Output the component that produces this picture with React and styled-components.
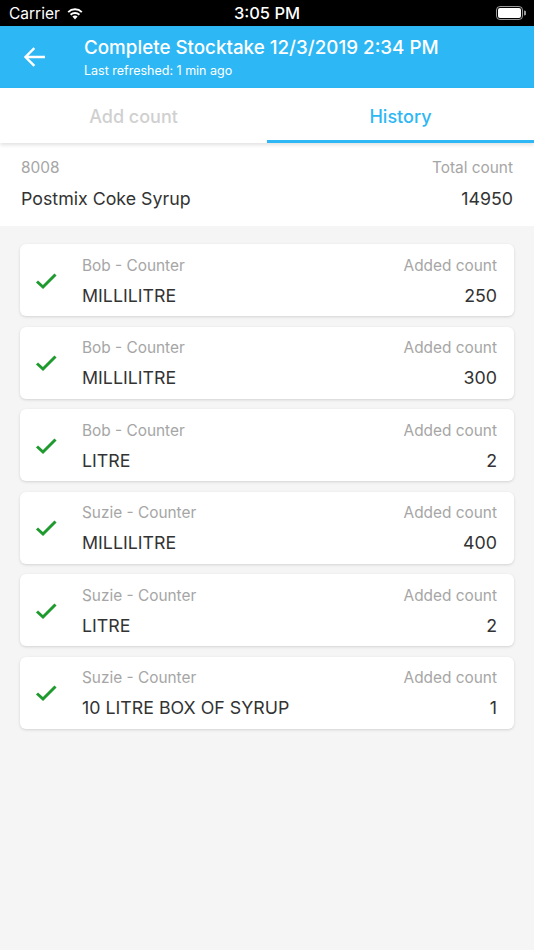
import React, { useState } from "react";
import styled, { createGlobalStyle } from "styled-components";

const GlobalStyle = createGlobalStyle`
  html, body {
    margin: 0;
    padding: 0;
    background: #f5f5f5;
    font-family: Inter, "Liberation Sans", sans-serif;
  }
`;

const Screen = styled.div`
  width: 534px;
  min-height: 950px;
  background: #f5f5f5;
  display: flex;
  flex-direction: column;
`;

const StatusBar = styled.div`
  height: 26px;
  background: #000;
  color: #fff;
  display: flex;
  align-items: center;
  justify-content: space-between;
  padding: 0 8px 0 9px;
  font-size: 15.5px;
  position: relative;
`;

const Carrier = styled.div`
  display: flex;
  align-items: center;
  gap: 6px;
`;

const Time = styled.div`
  position: absolute;
  left: 0;
  right: 0;
  text-align: center;
  font-size: 16.5px;
  font-weight: 500;
  pointer-events: none;
`;

const Header = styled.div`
  height: 62px;
  background: #2eb7f5;
  display: flex;
  align-items: center;
  color: #fff;
`;

const BackButton = styled.div`
  width: 84px;
  display: flex;
  justify-content: center;
  padding-right: 16px;
  box-sizing: border-box;
`;

const TitleBlock = styled.div`
  display: flex;
  flex-direction: column;
  gap: 4px;
`;

const Title = styled.div`
  font-size: 18.8px;
  font-weight: 500;
`;

const Subtitle = styled.div`
  font-size: 12.5px;
`;

const Tabs = styled.div`
  height: 55px;
  background: #fff;
  display: flex;
  box-shadow: 0 2px 4px rgba(0, 0, 0, 0.12);
  position: relative;
  z-index: 1;
`;

const Tab = styled.div`
  flex: 1;
  display: flex;
  align-items: center;
  justify-content: center;
  font-size: 18px;
  font-weight: 500;
  color: ${({ active }) => (active ? "#2eb7f5" : "#d0d0d0")};
  border-bottom: 3px solid ${({ active }) => (active ? "#2eb7f5" : "transparent")};
  padding-top: 5px;
  cursor: pointer;
`;

const Summary = styled.div`
  background: #fff;
  height: 83px;
  box-sizing: border-box;
  padding: 15px 21px 0 21px;
  display: flex;
  flex-direction: column;
  gap: 11px;
`;

const Row = styled.div`
  display: flex;
  justify-content: space-between;
  align-items: baseline;
`;

const Label = styled.span`
  font-size: 15.4px;
  color: #a6a6a6;
`;

const Value = styled.span`
  font-size: 17.8px;
  color: #333;
`;

const List = styled.div`
  padding: 18px 20px;
  display: flex;
  flex-direction: column;
  gap: 10.6px;
`;

const Card = styled.div`
  background: #fff;
  border-radius: 6px;
  height: 72px;
  display: flex;
  align-items: center;
  box-shadow: 0 1px 3px rgba(0, 0, 0, 0.14);
`;

const CheckWrap = styled.div`
  width: 62px;
  display: flex;
  padding-left: 15px;
  box-sizing: border-box;
  margin-top: 1px;
`;

const CardBody = styled.div`
  flex: 1;
  padding-right: 17px;
  display: flex;
  flex-direction: column;
  gap: 10px;
  margin-top: 1px;
`;

const entries = [
  { who: "Bob - Counter", unit: "MILLILITRE", count: 250 },
  { who: "Bob - Counter", unit: "MILLILITRE", count: 300 },
  { who: "Bob - Counter", unit: "LITRE", count: 2 },
  { who: "Suzie - Counter", unit: "MILLILITRE", count: 400 },
  { who: "Suzie - Counter", unit: "LITRE", count: 2 },
  { who: "Suzie - Counter", unit: "10 LITRE BOX OF SYRUP", count: 1 },
];

const Wifi = () => (
  <svg width="18" height="13" viewBox="0 0 18 13">
    <path d="M9 12.5 L6.4 9.6 A3.8 3.8 0 0 1 11.6 9.6 Z" fill="#fff" />
    <path d="M4.6 7.7 A6.4 6.4 0 0 1 13.4 7.7" stroke="#fff" strokeWidth="2" fill="none" />
    <path d="M2.2 5.1 A9.8 9.8 0 0 1 15.8 5.1" stroke="#fff" strokeWidth="2" fill="none" />
  </svg>
);

const Battery = () => (
  <svg width="30" height="14" viewBox="0 0 30 14">
    <rect x="0.5" y="0.5" width="26" height="13" rx="3.5" stroke="#fff" fill="none" opacity="0.6" />
    <rect x="2" y="2" width="23" height="10" rx="2" fill="#fff" />
    <path d="M28 4.5 A2 2 0 0 1 28 9.5 Z" fill="#fff" opacity="0.6" />
  </svg>
);

const BackArrow = () => (
  <svg width="22" height="20" viewBox="0 0 22 20">
    <path d="M21 10 H3 M10.5 2 L2.5 10 L10.5 18" stroke="#fff" strokeWidth="2.4" fill="none" strokeLinecap="square" />
  </svg>
);

const Check = () => (
  <svg width="22" height="18" viewBox="0 0 22 18">
    <path d="M2 9.5 L8 15 L20.5 2.5" stroke="#1e9a2e" strokeWidth="3" fill="none" />
  </svg>
);

const App = () => {
  const [tab, setTab] = useState("history");
  return (
    <>
      <GlobalStyle />
      <Screen>
        <StatusBar>
          <Carrier>
            Carrier <Wifi />
          </Carrier>
          <Time>3:05 PM</Time>
          <Battery />
        </StatusBar>
        <Header>
          <BackButton>
            <BackArrow />
          </BackButton>
          <TitleBlock>
            <Title>Complete Stocktake 12/3/2019 2:34 PM</Title>
            <Subtitle>Last refreshed: 1 min ago</Subtitle>
          </TitleBlock>
        </Header>
        <Tabs>
          <Tab active={tab === "add"} onClick={() => setTab("add")}>
            Add count
          </Tab>
          <Tab active={tab === "history"} onClick={() => setTab("history")}>
            History
          </Tab>
        </Tabs>
        <Summary>
          <Row>
            <Label>8008</Label>
            <Label>Total count</Label>
          </Row>
          <Row>
            <Value>Postmix Coke Syrup</Value>
            <Value>14950</Value>
          </Row>
        </Summary>
        <List>
          {entries.map((e, i) => (
            <Card key={i}>
              <CheckWrap>
                <Check />
              </CheckWrap>
              <CardBody>
                <Row>
                  <Label>{e.who}</Label>
                  <Label>Added count</Label>
                </Row>
                <Row>
                  <Value>{e.unit}</Value>
                  <Value>{e.count}</Value>
                </Row>
              </CardBody>
            </Card>
          ))}
        </List>
      </Screen>
    </>
  );
};

export default App;
